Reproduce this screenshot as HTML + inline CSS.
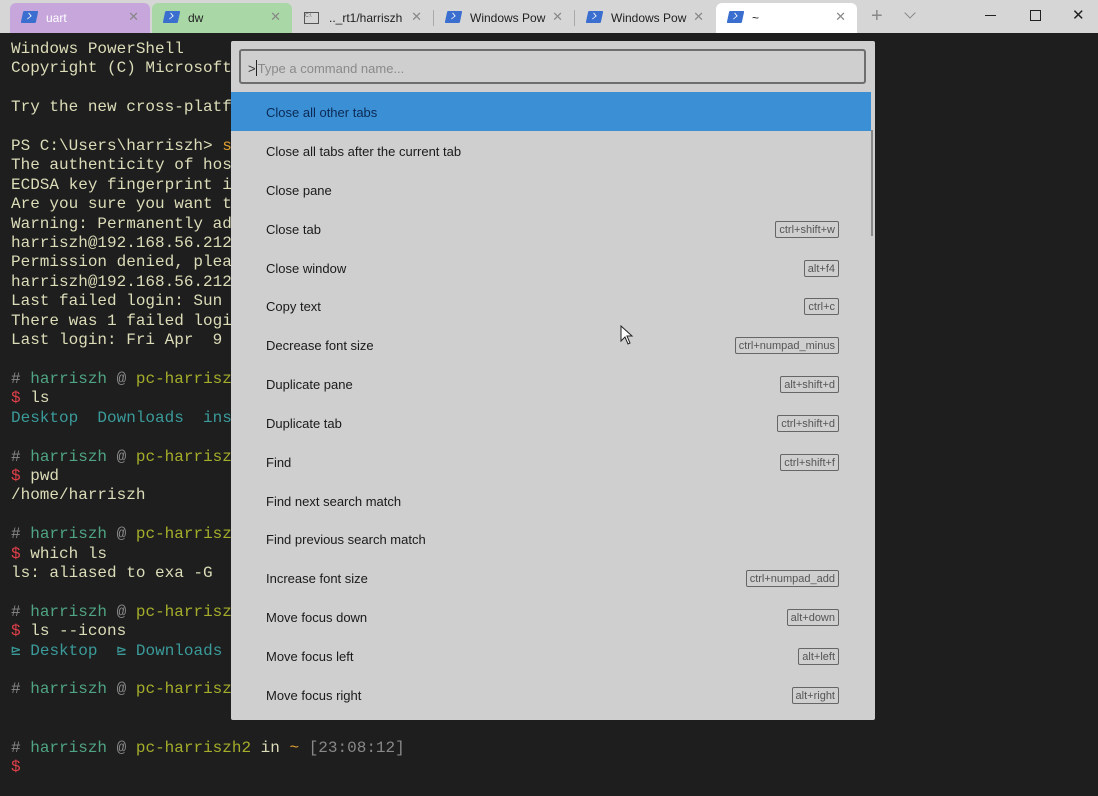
<!DOCTYPE html>
<html><head><meta charset="utf-8"><style>
*{margin:0;padding:0;box-sizing:border-box}
body{width:1098px;height:796px;overflow:hidden;background:#1e1e1e;position:relative;font-family:"Liberation Sans",sans-serif}
#bar{position:absolute;left:0;top:0;width:1098px;height:33px;background:#d6d6d6}
.tab{position:absolute;top:3px;height:30px;border-radius:6px 6px 0 0;font-size:12px;color:#222;}
.tab .ic{position:absolute;left:12px;top:8px;width:15px;height:12px;background:#3a6fd0;border-radius:1px;transform:skewX(-12deg)}
.tab .ic:after{content:"";position:absolute;left:3px;top:2px;width:5px;height:5px;border-right:1.5px solid #fff;border-bottom:1.5px solid #fff;transform:rotate(-45deg) scale(.8)}
.tab .t{position:absolute;left:36px;top:8px;white-space:nowrap}
.tab .x{position:absolute;right:11px;top:6px;font-size:13px;color:#888}
.sep{position:absolute;top:10px;width:1px;height:16px;background:#aaa}
#term{position:absolute;left:11px;top:40px;font-family:"Liberation Mono",monospace;font-size:16px;line-height:19.4px;color:#dcdcb8;white-space:pre}
.g{color:#888}.h{color:#4fa483}.p{color:#a4ad2a}.d{color:#e0404a}.c{color:#3b9a9a}.o{color:#e0a030}
#pal{position:absolute;left:231px;top:41px;width:644px;height:679px;background:#cfcfcf;overflow:hidden;border-radius:2px}
#inp{position:absolute;left:8px;top:8px;width:627px;height:35px;border:2px solid #6e6e6e;border-radius:3px;font-size:13px;color:#8a8a8a;padding:9px 0 0 7px}
#inp b{font-weight:normal;color:#333}
#inp i{display:inline-block;width:1px;height:16px;background:#222;vertical-align:-3px;margin-right:1px}
.row{position:absolute;left:0;width:640px;height:39px;font-size:13px;color:#1a1a1a}
.row span{position:absolute;left:35px;top:13px}
.row.sel{background:#3a8fd5;color:#0c2a55}
.k{position:absolute;right:32px;top:12px;font-size:11px;color:#555;border:1px solid #666;border-radius:2px;padding:2px 3px 1px;line-height:12px}
#sb{position:absolute;left:640px;top:89px;width:2px;height:106px;background:#888}
</style></head><body>
<div id="bar">
<div class="tab" style="left:10px;width:140px;background:#c7a6dc"><div class="ic"></div><div class="t" style="color:#fff">uart</div><div class="x">✕</div></div>
<div class="tab" style="left:152px;width:140px;background:#a9d7a6"><div class="ic"></div><div class="t">dw</div><div class="x">✕</div></div>
<div class="tab" style="left:293px;width:140px"><div style="position:absolute;left:11px;top:9px;width:15px;height:12px;border:1px solid #555;font-size:5px;color:#555">C:\</div><div class="t">.._rt1/harriszh</div><div class="x">✕</div></div>
<div class="sep" style="left:433px"></div>
<div class="tab" style="left:434px;width:140px"><div class="ic"></div><div class="t">Windows Pow</div><div class="x">✕</div></div>
<div class="sep" style="left:574px"></div>
<div class="tab" style="left:575px;width:140px"><div class="ic"></div><div class="t">Windows Pow</div><div class="x">✕</div></div>
<div class="tab" style="left:716px;width:141px;background:#fff"><div class="ic"></div><div class="t">~</div><div class="x">✕</div></div>
<div style="position:absolute;left:871px;top:5px;font-size:20px;color:#888">+</div>
<div style="position:absolute;left:906px;top:9px;width:8px;height:8px;border-right:1.3px solid #888;border-bottom:1.3px solid #888;transform:rotate(45deg)"></div>
<div style="position:absolute;left:985px;top:15px;width:11px;height:1px;background:#222"></div>
<div style="position:absolute;left:1030px;top:10px;width:11px;height:11px;border:1.3px solid #222"></div>
<div style="position:absolute;left:1072px;top:6px;font-size:15px;color:#222">✕</div>
</div>
<div id="term"><span>Windows PowerShell
Copyright (C) Microsoft

Try the new cross-platf

PS C:\Users\harriszh> <span class="o">s</span>
The authenticity of hos
ECDSA key fingerprint i
Are you sure you want t
Warning: Permanently ad
harriszh@192.168.56.212
Permission denied, plea
harriszh@192.168.56.212
Last failed login: Sun
There was 1 failed logi
Last login: Fri Apr  9

<span class="g">#</span> <span class="h">harriszh</span> <span class="g">@</span> <span class="p">pc-harrisz</span>
<span class="d">$</span> ls
<span class="c">Desktop  Downloads  ins</span>

<span class="g">#</span> <span class="h">harriszh</span> <span class="g">@</span> <span class="p">pc-harrisz</span>
<span class="d">$</span> pwd
/home/harriszh

<span class="g">#</span> <span class="h">harriszh</span> <span class="g">@</span> <span class="p">pc-harrisz</span>
<span class="d">$</span> which ls
ls: aliased to exa -G

<span class="g">#</span> <span class="h">harriszh</span> <span class="g">@</span> <span class="p">pc-harrisz</span>
<span class="d">$</span> ls --icons
<span class="c">⊵ Desktop  ⊵ Downloads</span>

<span class="g">#</span> <span class="h">harriszh</span> <span class="g">@</span> <span class="p">pc-harrisz</span>


<span class="g">#</span> <span class="h">harriszh</span> <span class="g">@</span> <span class="p">pc-harriszh2</span> in <span class="o">~</span> <span class="g">[23:08:12]</span>
<span class="d">$</span></span></div>
<div id="pal">
<div id="inp"><b>&gt;</b><i></i>Type a command name...</div>
<div class="row sel" style="top:51px"><span>Close all other tabs</span></div>
<div class="row" style="top:90px"><span>Close all tabs after the current tab</span></div>
<div class="row" style="top:129px"><span>Close pane</span></div>
<div class="row" style="top:168px"><span>Close tab</span><div class="k">ctrl+shift+w</div></div>
<div class="row" style="top:207px"><span>Close window</span><div class="k">alt+f4</div></div>
<div class="row" style="top:245px"><span>Copy text</span><div class="k">ctrl+c</div></div>
<div class="row" style="top:284px"><span>Decrease font size</span><div class="k">ctrl+numpad_minus</div></div>
<div class="row" style="top:323px"><span>Duplicate pane</span><div class="k">alt+shift+d</div></div>
<div class="row" style="top:362px"><span>Duplicate tab</span><div class="k">ctrl+shift+d</div></div>
<div class="row" style="top:401px"><span>Find</span><div class="k">ctrl+shift+f</div></div>
<div class="row" style="top:440px"><span>Find next search match</span></div>
<div class="row" style="top:478px"><span>Find previous search match</span></div>
<div class="row" style="top:517px"><span>Increase font size</span><div class="k">ctrl+numpad_add</div></div>
<div class="row" style="top:556px"><span>Move focus down</span><div class="k">alt+down</div></div>
<div class="row" style="top:595px"><span>Move focus left</span><div class="k">alt+left</div></div>
<div class="row" style="top:634px"><span>Move focus right</span><div class="k">alt+right</div></div>
<div id="sb"></div>
<svg style="position:absolute;left:389px;top:284px" width="14" height="20" viewBox="0 0 14 20"><path d="M1 1 L1 16 L5 12 L8 19 L10 18 L7 11 L12 11 Z" fill="#fff" stroke="#222" stroke-width="1"/></svg>
</div>
</body></html>
